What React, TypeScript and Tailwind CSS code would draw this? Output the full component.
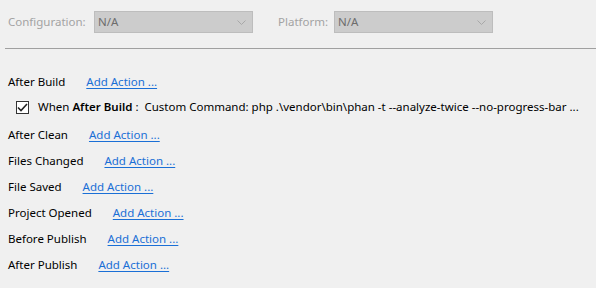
import React from "react";

const events = [
  "After Clean",
  "Files Changed",
  "File Saved",
  "Project Opened",
  "Before Publish",
  "After Publish",
];

function Chevron() {
  return (
    <svg width="9" height="5" viewBox="0 0 9 5" className="text-[#a8a8a8]">
      <path d="M0.5 0.5 L4.5 4.5 L8.5 0.5" fill="none" stroke="currentColor" strokeWidth="1" />
    </svg>
  );
}

function Select({ label, labelWidth }: { label: string; labelWidth: string }) {
  return (
    <div className="flex items-center">
      <span className={`${labelWidth} text-[#a3a3a3]`}>{label}</span>
      <div className="flex h-[22px] w-[159px] items-center justify-between border border-[#bdbdbd] bg-[#cccccc] pl-[3px] pr-[6px] text-[#6d6d6d]">
        <span>N/A</span>
        <Chevron />
      </div>
    </div>
  );
}

function AddAction() {
  return (
    <a href="#" className="ml-[21px] text-[#1a6fd6] underline underline-offset-2">
      Add Action ...
    </a>
  );
}

export default function App() {
  return (
    <div
      className="h-[288px] w-[596px] overflow-hidden bg-[#f0f0f0] text-[11.5px] text-black"
      style={{ fontFamily: '"Segoe UI", "Noto Sans", sans-serif' }}
    >
      <div className="flex gap-[25px] pl-2 pt-[11px]">
        <Select label="Configuration:" labelWidth="w-[86px]" />
        <Select label="Platform:" labelWidth="w-[56px]" />
      </div>
      <div className="ml-[5px] mt-[15px] h-px bg-[#a0a0a0]" />

      <div className="pl-2 pt-[22px]">
        <div className="flex h-[21px] items-center">
          <span>After Build</span>
          <AddAction />
        </div>
        <div className="flex h-[30px] items-center whitespace-nowrap pl-2">
          <div className="flex h-[13px] w-[13px] items-center justify-center border border-[#333333] bg-white">
            <svg width="11" height="9" viewBox="0 0 11 9">
              <path d="M1 4.5 L4 7.5 L10 1" fill="none" stroke="#222" strokeWidth="1.6" />
            </svg>
          </div>
          <span className="ml-[9px]">
            When <span className="font-semibold">After Build</span> :&nbsp;&nbsp;Custom Command: php .\vendor\bin\phan -t --analyze-twice --no-progress-bar ...
          </span>
        </div>
        {events.map((e) => (
          <div key={e} className="flex h-[26px] items-center">
            <span>{e}</span>
            <AddAction />
          </div>
        ))}
      </div>
    </div>
  );
}
